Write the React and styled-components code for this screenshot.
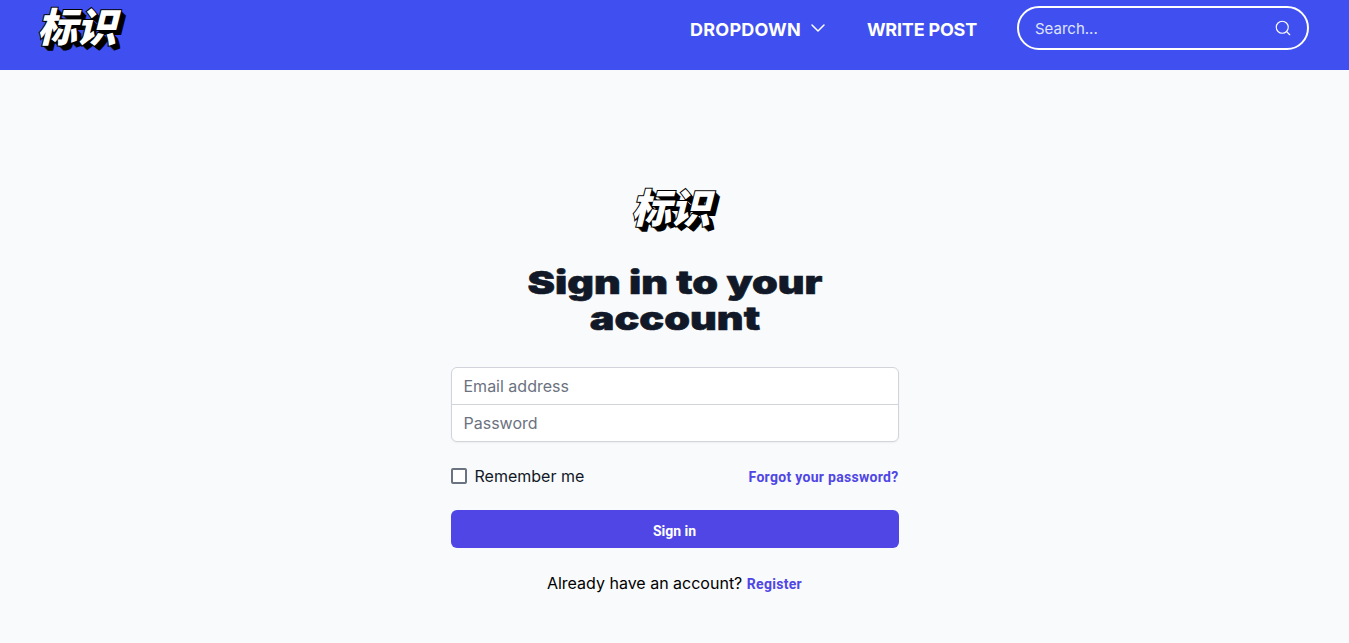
import styled, { createGlobalStyle } from "styled-components";
import { ChevronDown, Search } from "lucide-react";

const GlobalStyle = createGlobalStyle`
  * {
    box-sizing: border-box;
  }
  body {
    margin: 0;
    background: #f9fafb;
    font-family: "Inter", "Noto Sans", sans-serif;
    color: #000;
  }
`;

const Page = styled.div`
  min-height: 643px;
  background: #f9fafb;
`;

const Navbar = styled.header`
  height: 70px;
  background: #4050f0;
  display: flex;
  align-items: flex-start;
  justify-content: space-between;
  padding: 0 40px 0 37px;
`;

const Logo = styled.div`
  font-family: "Noto Sans CJK SC", sans-serif;
  font-size: 40px;
  font-weight: 900;
  font-style: italic;
  line-height: 50px;
  letter-spacing: -0.5px;
  padding-right: 8px;
  color: #fff;
  -webkit-text-stroke: 2px #000;
  paint-order: stroke fill;
  text-shadow: 1px 1px 0 #000, 2px 2px 0 #000, 3px 3px 0 #000, 4px 4px 0 #000, 5px 5px 0 #000;
`;

const NavRight = styled.nav`
  display: flex;
  align-items: center;
  height: 44px;
  margin-top: 6px;
`;

const NavLink = styled.a`
  display: flex;
  align-items: center;
  padding-top: 2px;
  font-family: "Inter", sans-serif;
  font-size: 18px;
  font-weight: 700;
  letter-spacing: ${(p) => p.$spacing}px;
  color: #fff;
  margin-right: ${(p) => p.$gap}px;
`;

const Chevron = styled(ChevronDown)`
  margin-left: 5px;
  position: relative;
  top: -1px;
`;

const SearchBox = styled.div`
  width: 292px;
  height: 44px;
  border: 2px solid #fff;
  border-radius: 22px;
  display: flex;
  align-items: center;
  justify-content: space-between;
  padding: 0 15px 0 16px;
  color: #dfe3ff;
  font-size: 15px;
`;

const Main = styled.main`
  width: 448px;
  margin: 0 auto;
  padding-top: 111px;
  display: flex;
  flex-direction: column;
`;

const LogoRow = styled.div`
  display: flex;
  justify-content: center;
`;

const Heading = styled.h1`
  margin: 34px 0 0;
  font-family: "Inter", sans-serif;
  font-size: 32px;
  line-height: 36px;
  font-weight: 900;
  color: #111827;
  text-align: center;
  -webkit-text-stroke: 0.6px #111827;
`;

const HeadingLine = styled.span`
  display: block;
  transform: scaleX(1.29);
`;

const Fields = styled.div`
  margin-top: 30px;
  background: #fff;
  border: 1px solid #d1d5db;
  border-radius: 6px;
  box-shadow: 0 1px 2px rgba(0, 0, 0, 0.05);
`;

const Field = styled.div`
  height: 36px;
  padding: 0 12px;
  display: flex;
  align-items: center;
  font-size: 16px;
  color: #6b7280;
  & + & {
    height: 37px;
    border-top: 1px solid #d1d5db;
  }
`;

const OptionsRow = styled.div`
  margin-top: 22px;
  height: 24px;
  display: flex;
  align-items: center;
  justify-content: space-between;
`;

const Remember = styled.label`
  display: flex;
  align-items: center;
  gap: 8px;
  font-size: 16px;
  color: #111827;
`;

const Checkbox = styled.span`
  width: 16px;
  height: 16px;
  background: #fff;
  border: 2px solid #6b7280;
  border-radius: 2px;
`;

const TextLink = styled.a`
  font-family: "Roboto", sans-serif;
  font-size: 14px;
  font-weight: 700;
  letter-spacing: 0.3px;
  color: #4f46e5;
`;

const ForgotLink = styled(TextLink)`
  padding-top: 2px;
`;

const SubmitButton = styled.button`
  margin-top: 22px;
  height: 38px;
  width: 100%;
  border: 0;
  border-radius: 6px;
  padding-top: 4px;
  background: #4f46e5;
  color: #fff;
  font-family: "Roboto", sans-serif;
  font-size: 14px;
  font-weight: 700;
`;

const Footer = styled.p`
  margin: 23px 0 0;
  text-align: center;
  font-size: 16px;
  line-height: 24px;
  color: #000;
`;

export default function App() {
  return (
    <Page>
      <GlobalStyle />
      <Navbar>
        <Logo>标识</Logo>
        <NavRight>
          <NavLink $gap={37} $spacing={0.2}>
            DROPDOWN
            <Chevron size={24} strokeWidth={1.5} />
          </NavLink>
          <NavLink $gap={40} $spacing={-0.2}>WRITE POST</NavLink>
          <SearchBox>
            Search...
            <Search size={18} strokeWidth={1.5} color="#fff" />
          </SearchBox>
        </NavRight>
      </Navbar>
      <Main>
        <LogoRow>
          <Logo>标识</Logo>
        </LogoRow>
        <Heading>
          <HeadingLine>Sign in to your</HeadingLine>
          <HeadingLine>account</HeadingLine>
        </Heading>
        <Fields>
          <Field>Email address</Field>
          <Field>Password</Field>
        </Fields>
        <OptionsRow>
          <Remember>
            <Checkbox />
            Remember me
          </Remember>
          <ForgotLink>Forgot your password?</ForgotLink>
        </OptionsRow>
        <SubmitButton>Sign in</SubmitButton>
        <Footer>
          Already have an account? <TextLink>Register</TextLink>
        </Footer>
      </Main>
    </Page>
  );
}
